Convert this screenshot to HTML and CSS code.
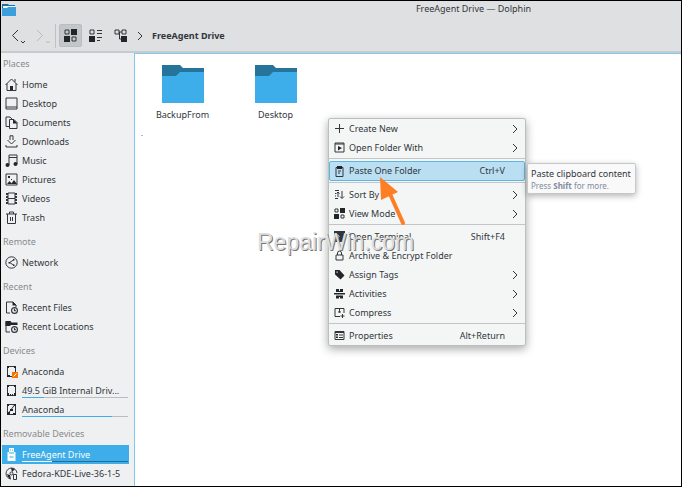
FILE: index.html
```html
<!DOCTYPE html>
<html lang="en">
<head>
  <meta charset="UTF-8" />
  <meta name="viewport" content="width=device-width, initial-scale=1.0"/>
  <title>FreeAgent Drive — Dolphin</title>
  <link rel="stylesheet" href="styles.css">
</head>
<body>
  <svg class="defs" width="0" height="0">
    <symbol id="chevron" viewBox="0 0 6 10"><path d="M1 1l4 4-4 4"/></symbol>
    <symbol id="folder" viewBox="0 0 42 38">
      <path d="M0 0h18l3 3h21v15H0z" fill="#27749a" stroke="none"/>
      <path d="M0 38V11h14l4-4h24v31z" fill="#3daee9" stroke="none"/>
    </symbol>
    <symbol id="clock" viewBox="0 0 6 6"><circle cx="3" cy="3" r="2.5"/><path d="M3 1.500v1.700h1.300"/></symbol>
  </svg>

  <div class="window">
    <header class="titlebar">
      <svg class="app-icon" viewBox="0 0 14 13">
        <path d="M0 1h6l1 1h6v4H0z" fill="#1b6fa5" stroke="none"/>
        <path d="M1 3h12v3H1z" fill="#f4fbff" stroke="none"/>
        <path d="M0 5h5l1-1h8v9H0z" fill="#3a9fdc" stroke="none"/>
      </svg>
      <h1>FreeAgent Drive — Dolphin</h1>
    </header>

    <nav class="toolbar">
      <button class="nav-btn" aria-label="Back">
        <svg viewBox="0 0 14 16"><path d="M7 2L1.500 7.500 7 13M10 13l2 2 2-2"/></svg>
      </button>
      <button class="nav-btn" aria-label="Forward" disabled>
        <svg viewBox="0 0 14 16"><path d="M1 2l5.500 5.500L1 13M10 13l2 2 2-2"/></svg>
      </button>
      <span class="divider"></span>
      <button class="view-btn active" aria-label="Icons">
        <svg viewBox="0 0 13 13"><path d="M1 1h4v4H1zM8 8h4v4H8z"/><path class="fill" d="M7 0h6v6H7zM0 7h6v6H0z"/></svg>
      </button>
      <button class="view-btn" aria-label="Compact">
        <svg viewBox="0 0 13 13"><path d="M1 1h4v4H1zM8 1.500h5M8 4.500h5M8 8.500h5M8 11.500h3"/><path class="fill" d="M0 7h6v6H0z"/></svg>
      </button>
      <button class="view-btn" aria-label="Details">
        <svg viewBox="0 0 13 13"><path d="M1 1h4v4H1zM8 1h4v4H8zM5 3h3M5.500 3v7H8"/><path class="fill" d="M7 7h6v6H7z"/></svg>
      </button>
      <svg class="chevron crumb-arrow"><use href="#chevron"/></svg>
      <a class="crumb" href="#">FreeAgent Drive</a>
    </nav>

    <div class="content">
      <aside class="sidebar">
        <h2>Places</h2>
        <ul>
          <li><a href="#"><svg viewBox="0 0 13 13"><path d="M.500 7L6.500 1l6 6M2 5.500v7h9v-7M10 1v3"/><path class="fill" d="M5 8h3v4H5z"/></svg><span>Home</span></a></li>
          <li><a href="#"><svg viewBox="0 0 13 13"><path d="M1 1h11v11H1zM1 10h11"/></svg><span>Desktop</span></a></li>
          <li><a href="#"><svg viewBox="0 0 13 13"><path d="M4 10.500H1V1h4l2 2M4.500 3.500H9l3 3v6H4.500z"/><path class="fill" d="M8 3l4.500 4.500H8z"/></svg><span>Documents</span></a></li>
          <li><a href="#"><svg viewBox="0 0 13 13"><path d="M5 5V.800h3V5M2.500 5L6.500 9l4-4M1 10v2h11v-2"/></svg><span>Downloads</span></a></li>
          <li><a href="#"><svg viewBox="0 0 13 13"><path d="M4 11V1h8v9M4 3.500h8"/><circle class="fill" cx="2.500" cy="11" r="2"/><circle class="fill" cx="10.500" cy="10" r="2"/></svg><span>Music</span></a></li>
          <li><a href="#"><svg viewBox="0 0 13 13"><path d="M1 1h11v11H1z"/><path class="fill" d="M2 11l2.500-3L7 11zM6 11l3-4 3 4zM3 3h2v2H3zM6 6h1v1H6z"/></svg><span>Pictures</span></a></li>
          <li><a href="#"><svg viewBox="0 0 13 13"><path d="M3 1h7v11H3zM3 6.500h7"/><path d="M2 1v12M11 1v12" stroke-width="2" stroke-dasharray="2 1"/></svg><span>Videos</span></a></li>
          <li><a href="#"><svg viewBox="0 0 13 13"><path d="M1 3h11M4.500 3V1h4v2M2.500 3v9.500h8V3M5.500 6v4M7.500 6v4"/></svg><span>Trash</span></a></li>
        </ul>

        <h2>Remote</h2>
        <ul>
          <li><a href="#"><svg viewBox="0 0 13 13"><circle cx="6.500" cy="6.500" r="5.700"/><path d="M8.500 4l-4 2.500 4 2.500"/><path class="fill" d="M8 3h1.500v1.500H8zM3.500 6H5v1.500H3.500zM8 8.500h1.500V10H8z"/></svg><span>Network</span></a></li>
        </ul>

        <h2>Recent</h2>
        <ul>
          <li><a href="#"><svg viewBox="0 0 13 13"><path d="M5 12H1.500V1H8l3 3v2"/><path class="fill" d="M7.500.500L11.500 4.500h-4z"/><use href="#clock" x="6" y="6" width="7" height="7"/></svg><span>Recent Files</span></a></li>
          <li><a href="#"><svg viewBox="0 0 13 13"><path d="M5 12H1V2"/><path class="fill" d="M.500 1h5l1 1.500h6V5H6L5 6H.500z"/><use href="#clock" x="6" y="6" width="7" height="7"/></svg><span>Recent Locations</span></a></li>
        </ul>

        <h2>Devices</h2>
        <ul>
          <li><a href="#"><svg viewBox="0 0 13 13"><path d="M2.500 1.500h8v10h-8z"/><path class="fill" d="M2 1h2v2H2zM9 1h2v2H9zM2 10h3v2H2z"/><path d="M7 7h6v6H7z" fill="#f67400" stroke="none"/><path d="M8.500 11.500l3-3" stroke="#fff"/></svg><span>Anaconda</span></a></li>
          <li><a href="#"><svg viewBox="0 0 13 13"><path d="M2.500 1.500h8v10h-8z"/><path class="fill" d="M2 1h2v2H2zM9 1h2v2H9zM2 9h2v3H2zM9 9h2v3H9zM5 10h1v2H5zM7 10h1v2H7z"/></svg><span>49.5 GiB Internal Driv...</span><i class="usage"><b style="width:21%"></b></i></a></li>
          <li><a href="#"><svg viewBox="0 0 13 13"><path d="M2.500 1.500h8v10h-8zM9.500 2l-6 8"/><path class="fill" d="M2 1h2v2H2zM9 1h2v2H9zM2 9h3v3H2zM8 10h3v2H8zM5 6h3v2H5z"/></svg><span>Anaconda</span><i class="usage"><b style="width:85%"></b></i></a></li>
        </ul>

        <h2>Removable Devices</h2>
        <ul>
          <li><a class="selected" href="#"><svg viewBox="0 0 13 13"><path class="fill" d="M4 0h5v4h1.500v9h-8V4H4z"/><path d="M5 2h1M7 2h1M4 5h5M4.500 9h4" stroke="#3daee9"/></svg><span>FreeAgent Drive</span><i class="usage"><b style="width:28%"></b></i></a></li>
          <li><a href="#"><svg viewBox="0 0 13 13"><path d="M6 12A5.500 5.500 0 1 1 12 6M8.500 7.500h3v5h-3z"/><circle cx="6.500" cy="6.500" r="1.500"/><path class="fill" d="M6 1l4 1-3 3zM2 7l3 1 1 4-3-2z"/></svg><span>Fedora-KDE-Live-36-1-5</span></a></li>
        </ul>
      </aside>

      <main class="files">
        <a class="file" href="#"><svg><use href="#folder"/></svg><span>BackupFrom</span></a>
        <a class="file" href="#"><svg><use href="#folder"/></svg><span>Desktop</span></a>
        <i class="marker"></i>
      </main>
    </div>

    <div class="menu" role="menu">
      <button role="menuitem"><svg viewBox="0 0 11 11"><path d="M5.500 1v9M1 5.500h9"/></svg><span>Create New</span><svg class="chevron"><use href="#chevron"/></svg></button>
      <button role="menuitem"><svg viewBox="0 0 11 11"><path d="M1 1h9v9H1zM1 2h9"/><path class="fill" d="M4 4l4 2-4 2.500z"/></svg><span>Open Folder With</span><svg class="chevron"><use href="#chevron"/></svg></button>
      <hr>
      <button class="current" role="menuitem"><svg viewBox="0 0 11 11"><path d="M2 1.500h7v9H2zM4 5h3M4 7h2"/><path class="fill" d="M3 0h5v3H3z"/></svg><span>Paste One Folder</span><kbd>Ctrl+V</kbd></button>
      <hr>
      <button role="menuitem"><svg viewBox="0 0 11 11"><path d="M1 1.500h4M1 4.500h1M1 7h1M1 9.500h3M4 8V3M2.500 4.500L4 3l1.500 1.500M8 2v7M6 7.500L8 9.500l2-2"/></svg><span>Sort By</span><svg class="chevron"><use href="#chevron"/></svg></button>
      <button role="menuitem"><svg viewBox="0 0 11 11"><path d="M1 1h3v3H1zM7 7h3v3H7z"/><path class="fill" d="M6 0h5v5H6zM0 6h5v5H0z"/></svg><span>View Mode</span><svg class="chevron"><use href="#chevron"/></svg></button>
      <hr>
      <button role="menuitem"><svg viewBox="0 0 11 11"><path d="M0 0h11v11H0z" fill="#31363b" stroke="none"/><path d="M3 3l2 2.500L3 8" stroke="#fcfcfc"/></svg><span>Open Terminal</span><kbd>Shift+F4</kbd></button>
      <button role="menuitem"><svg viewBox="0 0 11 11"><path d="M2 5h7v5H2zM3.500 5V3a2 2 0 0 1 4 0v2"/></svg><span>Archive &amp; Encrypt Folder</span></button>
      <button role="menuitem"><svg viewBox="0 0 11 11"><path class="fill" fill-rule="evenodd" d="M1 1h4.500l5 5.500-4 4L1 5.500zM2.500 2.500v1.200h1.200V2.500z"/></svg><span>Assign Tags</span><svg class="chevron"><use href="#chevron"/></svg></button>
      <button role="menuitem"><svg viewBox="0 0 11 11"><path class="fill" d="M2 1h3v2h1V1h3v3H2zM0 5h11v1.500H0zM2 7.500h7v3H6V9H5v1.500H2z"/></svg><span>Activities</span><svg class="chevron"><use href="#chevron"/></svg></button>
      <button role="menuitem"><svg viewBox="0 0 11 11"><path d="M6 9.500H1v-8h9V6M5.500 1.500v4M4 5h3M8.500 7v4M6.500 9h4"/></svg><span>Compress</span><svg class="chevron"><use href="#chevron"/></svg></button>
      <hr>
      <button role="menuitem"><svg viewBox="0 0 11 11"><path d="M1 1.500h9v8H1zM1 2.500h9M5 5h4M5 7.500h4"/><path class="fill" d="M2 4h2v1.500H2zM2 6.500h2V8H2z"/></svg><span>Properties</span><kbd>Alt+Return</kbd></button>
    </div>

    <div class="tooltip" role="tooltip">
      <p>Paste clipboard content</p>
      <small>Press <b>Shift</b> for more.</small>
    </div>

    <svg class="pointer" viewBox="0 0 28 50">
      <path d="M10 17l13 29" stroke="#fd7e24" stroke-width="4" stroke-linecap="round"/>
      <path d="M0 0l18 15-17 8z" fill="#fd7e24" stroke="none"/>
    </svg>
    <div class="watermark">RepairWin.com</div>
  </div>
</body>
</html>
```
FILE: styles.css
```css
* {
  box-sizing: border-box;
}

body {
  margin: 0;
  font: 9px/16px "Noto Sans", sans-serif;
  color: #31363b;
}

h1, h2, p, ul {
  margin: 0;
  padding: 0;
  font-size: 9px;
  font-weight: normal;
}

ul {
  list-style: none;
}

a {
  color: inherit;
  text-decoration: none;
}

button {
  font: inherit;
  color: inherit;
  background: none;
  border: none;
  padding: 0;
}

svg {
  display: block;
  flex: none;
  fill: none;
  stroke: #31363b;
}

.fill {
  fill: #232629;
  stroke: none;
}

.defs {
  position: absolute;
}

.window {
  position: relative;
  display: flex;
  flex-direction: column;
  min-height: 100vh;
  border: 1px solid #000;
  background: #dfe0e2;
}

.titlebar {
  display: flex;
  align-items: center;
  height: 16px;
  padding-left: 1px;
}

.titlebar h1 {
  flex: 1;
  padding-left: 250px;
  text-align: center;
}

.app-icon {
  width: 14px;
  height: 13px;
}

.toolbar {
  display: flex;
  align-items: center;
  height: 36px;
  padding: 3px 0 0 10px;
  border-bottom: 2px solid #c8cbcd;
}

.nav-btn {
  width: 25px;
}

.nav-btn svg {
  width: 14px;
  height: 16px;
}

.nav-btn:disabled svg {
  stroke: #b9bbbd;
}

.divider {
  width: 1px;
  height: 24px;
  margin-left: -6px;
  margin-right: 3px;
  background: #bfc1c3;
}

.view-btn {
  display: flex;
  align-items: center;
  justify-content: center;
  width: 23px;
  height: 23px;
  margin-right: 2px;
  border-radius: 2px;
}

.view-btn.active {
  background: #c3c7ca;
  border: 1px solid #b9bdc0;
}

.view-btn svg {
  width: 13px;
  height: 13px;
}

.chevron {
  width: 6px;
  height: 10px;
}

.crumb-arrow {
  margin: 0 9px 0 3px;
}

.crumb {
  font-weight: bold;
}

.content {
  flex: 1;
  display: flex;
}

.sidebar {
  flex: none;
  width: 133px;
  padding-right: 5px;
  background: #eff0f1;
}

.sidebar h2 {
  padding: 7px 2px 3px;
  color: #888b8e;
}

.sidebar h2:first-child {
  padding-top: 3px;
}

.sidebar a {
  display: grid;
  grid-template-columns: 13px 1fr;
  column-gap: 4px;
  align-items: center;
  height: 19px;
  margin-left: 1px;
  padding: 0 1px 0 3px;
  white-space: nowrap;
}

.sidebar a > svg {
  width: 13px;
  height: 13px;
}

.sidebar a > * {
  grid-row: 1;
}

.sidebar span,
.usage {
  grid-column: 2;
}

.usage {
  align-self: end;
  height: 1px;
  margin-bottom: 2px;
  background: #b9bcbe;
}

.usage b {
  display: block;
  height: 1px;
  background: #3daee9;
}

.sidebar .selected {
  background: #3daee9;
  color: #fcfcfc;
}

.selected .fill {
  fill: #fcfcfc;
}

.selected .usage {
  background: #2a6d92;
}

.selected .usage b {
  background: #fcfcfc;
}

.files {
  position: relative;
  flex: 1;
  display: flex;
  align-items: flex-start;
  padding: 11px 0 0 1px;
  background: #fff;
  border: 1px solid #7fc8ee;
  border-right: none;
  border-bottom: none;
}

.file {
  display: flex;
  flex-direction: column;
  align-items: center;
  gap: 4px;
  width: 93px;
}

.file svg {
  width: 42px;
  height: 38px;
}

.marker {
  position: absolute;
  left: 6px;
  top: 81px;
  width: 2px;
  height: 1px;
  background: #7fc8ee;
}

.menu {
  position: absolute;
  left: 327px;
  top: 117px;
  width: 198px;
  border: 1px solid #bcbfc1;
  border-radius: 2px;
  background: #f4f6f6;
  box-shadow: 0 3px 10px rgba(0, 0, 0, 0.35);
}

.menu button {
  display: flex;
  align-items: center;
  width: 100%;
  height: 19px;
  padding: 0 7px 0 5px;
  white-space: nowrap;
}

.menu button > svg:first-child {
  width: 11px;
  height: 11px;
  margin-right: 4px;
}

.menu span {
  flex: 1;
  text-align: left;
}

.menu kbd {
  margin-right: 13px;
  font: inherit;
}

.menu hr {
  height: 1px;
  margin: 1px 0 2px;
  border: none;
  background: #c3c6c8;
}

.menu .current {
  height: 20px;
  padding: 0 6px 0 4px;
  border: 1px solid #5db5e2;
  border-radius: 2px;
  background: #badff2;
}

.tooltip {
  position: absolute;
  left: 526px;
  top: 162px;
  padding: 2px 4px 3px 3px;
  border: 1px solid #c6c8ca;
  border-radius: 2px;
  background: #f9f9fa;
  box-shadow: 0 2px 6px rgba(0, 0, 0, 0.3);
  white-space: nowrap;
}

.tooltip small {
  display: block;
  font-size: 8px;
  line-height: 8px;
  color: #7f8c9d;
}

.pointer {
  position: absolute;
  left: 379px;
  top: 176px;
  width: 28px;
  height: 50px;
}

.watermark {
  position: absolute;
  left: 256px;
  top: 228px;
  font: 23px/26px "Liberation Sans", Arial, sans-serif;
  color: #dedede;
  text-shadow: 1px 1px 0 #777;
}
```
